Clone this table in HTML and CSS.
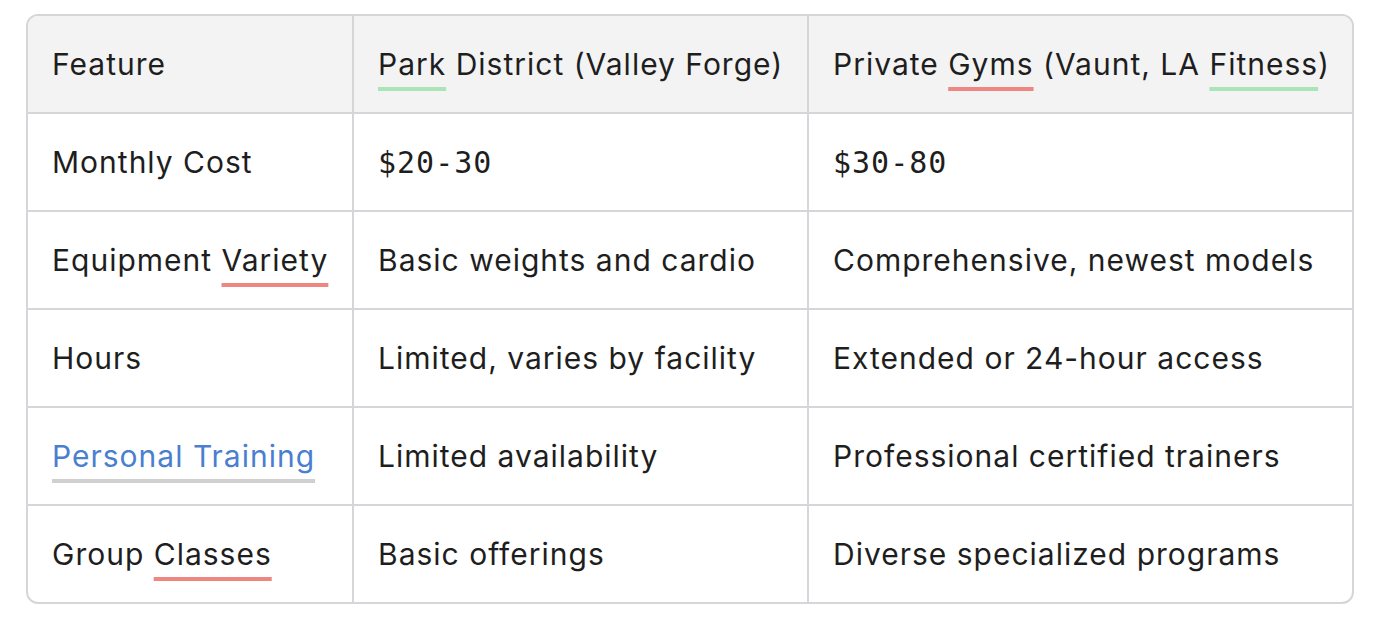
FILE: index.html
```html
<!DOCTYPE html>
<html lang="en">
<head>
<meta charset="utf-8">
<title>Park District vs Private Gyms</title>
<link rel="stylesheet" href="styles.css">
</head>
<body>
<div class="page">
  <div class="table-wrap">
    <table class="compare">
      <colgroup>
        <col class="c1"><col class="c2"><col class="c3">
      </colgroup>
      <thead>
        <tr>
          <th>Feature</th>
          <th><span class="ul ul-green">Park</span> District (Valley Forge)</th>
          <th>Private <span class="ul ul-red">Gyms</span> (Vaunt, LA <span class="ul ul-green">Fitness</span>)</th>
        </tr>
      </thead>
      <tbody>
        <tr>
          <td>Monthly Cost</td>
          <td><code>$20-30</code></td>
          <td><code>$30-80</code></td>
        </tr>
        <tr>
          <td>Equipment <span class="ul ul-red">Variety</span></td>
          <td>Basic weights and cardio</td>
          <td>Comprehensive, newest models</td>
        </tr>
        <tr>
          <td>Hours</td>
          <td>Limited, varies by facility</td>
          <td>Extended or 24-hour access</td>
        </tr>
        <tr>
          <td><a class="link" href="#">Personal Training</a></td>
          <td>Limited availability</td>
          <td>Professional certified trainers</td>
        </tr>
        <tr>
          <td>Group <span class="ul ul-red">Classes</span></td>
          <td>Basic offerings</td>
          <td>Diverse specialized programs</td>
        </tr>
      </tbody>
    </table>
  </div>
</div>
</body>
</html>
```
FILE: styles.css
```css
html, body {
  margin: 0;
  padding: 0;
  background: #ffffff;
}

.page {
  padding: 14px 32px 0 26px;
}

.table-wrap {
  width: 1328px;
  box-sizing: border-box;
  border: 2px solid #d6d6da;
  border-radius: 12px;
  overflow: hidden;
}

.compare {
  width: 100%;
  border-collapse: separate;
  border-spacing: 0;
  table-layout: fixed;
  font-family: Inter, "Noto Sans", sans-serif;
  font-size: 30px;
  letter-spacing: 1px;
  color: #1e1e1e;
}

.c1 { width: 326px; }
.c2 { width: 455px; }
.c3 { width: 543px; }

.compare th,
.compare td {
  box-sizing: border-box;
  height: 98px;
  padding: 0 24px;
  text-align: left;
  font-weight: 400;
  vertical-align: middle;
  border-right: 2px solid #d6d6da;
  border-bottom: 2px solid #d6d6da;
  white-space: nowrap;
}

.compare th:last-child,
.compare td:last-child {
  border-right: none;
}

.compare tbody tr:last-child td {
  border-bottom: none;
  height: 96px;
}

.compare thead th {
  background: #f3f3f3;
}

.compare code {
  font-family: "DejaVu Sans Mono", "Liberation Mono", monospace;
  font-size: 30px;
}

.ul {
  text-decoration: underline;
  text-decoration-thickness: 4px;
  text-underline-offset: 12px;
  text-decoration-skip-ink: none;
}

.ul-green { text-decoration-color: #a9e5b7; }
.ul-red { text-decoration-color: #ee8682; }

.link {
  color: #4a7fcf;
  text-decoration: underline;
  text-decoration-color: #d0d0d2;
  text-decoration-thickness: 4px;
  text-underline-offset: 12px;
  text-decoration-skip-ink: none;
}
```
